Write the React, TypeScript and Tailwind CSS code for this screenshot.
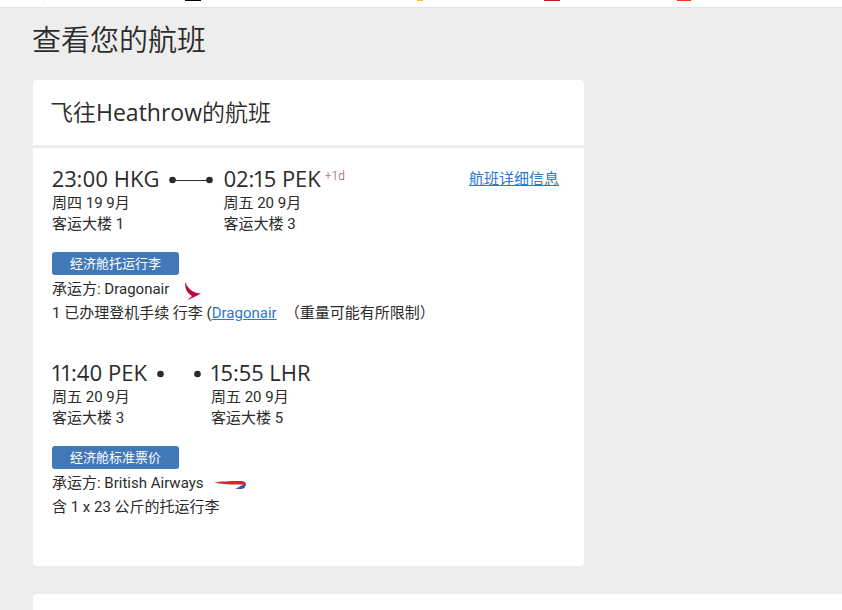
import type { ReactNode } from "react";

const heading = "font-['Open_Sans','Noto_Sans_CJK_SC',sans-serif]";

type Stop = { time: string; date: string; terminal: string; offset?: string };
type Flight = {
  from: Stop;
  to: Stop;
  line: boolean;
  cabin: string;
  carrier: string;
  logo: ReactNode;
  baggage: ReactNode;
};

function DragonairLogo() {
  return (
    <svg className="ml-4 mt-1 h-5 w-4" viewBox="0 0 16 20" aria-hidden="true">
      <path d="M0 1C0 8 2 12 7 15C6 16 4 18 2 19C6 18 11 15 16 12.500C9 12.500 3 8 0 1Z" fill="#bd0a3d" />
    </svg>
  );
}

function BritishAirwaysLogo() {
  return (
    <svg className="ml-2.5 mt-1 h-2.5 w-8" viewBox="0 0 32 10" aria-hidden="true">
      <path d="M0 2.500C7 1.300 20 .8 27 1C32 1.200 33 4 31 6C30 4.500 27 4.600 23 4.600C14 4.400 7 4 0 2.500Z" fill="#cf2a2d" />
      <path d="M31.500 4.500C32 8.500 28 10 21 8.500C25 8 26 5 31.500 4.500Z" fill="#315fa8" />
    </svg>
  );
}

function Connector({ line }: { line: boolean }) {
  return (
    <svg className="mx-2.5 mt-1 h-2 w-11 shrink-0" viewBox="0 0 44 8" fill="#2b2b2b" aria-hidden="true">
      <circle cx="3.500" cy="4" r="3.300" />
      <circle cx="40.500" cy="4" r="3.300" />
      {line && <rect x="3" y="4" width="37" height="1" />}
    </svg>
  );
}

function StopDetails({ stop, children }: { stop: Stop; children?: ReactNode }) {
  return (
    <div>
      <div className="flex h-7 items-center pb-0.5">
        <span className="whitespace-nowrap font-['Open_Sans',sans-serif] text-[22px] leading-7 proportional-nums">{stop.time}</span>
        {stop.offset && <sup className="top-0 mb-1 ml-1 text-xs font-light text-[#93506a]">{stop.offset}</sup>}
        {children}
      </div>
      <p>{stop.date}</p>
      <p>{stop.terminal}</p>
    </div>
  );
}

const flights: Flight[] = [
  {
    from: { time: "23:00 HKG", date: "周四 19 9月", terminal: "客运大楼 1" },
    to: { time: "02:15 PEK", date: "周五 20 9月", terminal: "客运大楼 3", offset: "+1d" },
    line: true,
    cabin: "经济舱托运行李",
    carrier: "Dragonair",
    logo: <DragonairLogo />,
    baggage: (
      <>
        1 已办理登机手续 行李 (<a href="#dragonair" className="text-[#2b78cf] underline">Dragonair</a>
        <span className="ml-2">（重量可能有所限制）</span>
      </>
    ),
  },
  {
    from: { time: "11:40 PEK", date: "周五 20 9月", terminal: "客运大楼 3" },
    to: { time: "15:55 LHR", date: "周五 20 9月", terminal: "客运大楼 5" },
    line: false,
    cabin: "经济舱标准票价",
    carrier: "British Airways",
    logo: <BritishAirwaysLogo />,
    baggage: "含 1 x 23 公斤的托运行李",
  },
];

function FlightSegment({ flight, link }: { flight: Flight; link?: boolean }) {
  return (
    <article>
      <div className="flex items-start">
        <StopDetails stop={flight.from}>
          <Connector line={flight.line} />
        </StopDetails>
        <StopDetails stop={flight.to} />
        {link && (
          <a href="#details" className="ml-auto mr-1.5 mt-1 text-[#2b78cf] underline">航班详细信息</a>
        )}
      </div>
      <div className="mb-0.5 mt-[17px] flex h-[23px] w-[127px] items-center justify-center rounded-[3px] bg-[#4178b7] text-[13px] text-white">
        {flight.cabin}
      </div>
      <p className="flex h-6 items-center">
        承运方: {flight.carrier}
        {flight.logo}
      </p>
      <p className="h-6 whitespace-nowrap leading-6">{flight.baggage}</p>
    </article>
  );
}

export default function App() {
  return (
    <div className="flex h-screen flex-col overflow-hidden bg-[#ededed] font-['Roboto','Noto_Sans_CJK_SC',sans-serif] text-[15px] font-[350] leading-[21px] text-[#2b2b2b]">
      <header className="flex h-2 shrink-0 items-start border-b border-[#e2e2e2] bg-white">
        <i className="ml-11 h-px w-px bg-[#dddddd]" />
        <i className="ml-[140px] h-px w-4 bg-black" />
        <i className="ml-[216px] h-px w-1.5 bg-[#ffc024]" />
        <i className="ml-[121px] h-px w-4 bg-[#c4171f]" />
        <i className="ml-[117px] h-px w-3.5 bg-[#ff3510]" />
      </header>
      <main className="flex grow flex-col pl-8">
        <h1 className={`${heading} pb-5 pt-3 text-[29px] font-[350] leading-10`}>查看您的航班</h1>
        <section className="ml-px w-[551px] max-w-full shrink-0 overflow-hidden rounded bg-white">
          <h2 className={`${heading} border-b-3 border-[#ededed] px-[17px] py-4 text-[23px] font-[350] leading-[33px]`}>
            飞往<span className="font-normal">Heathrow</span>的航班
          </h2>
          <div className="flex flex-col gap-[34px] px-[19px] pb-[47px] pt-[17px] font-normal">
            {flights.map((flight, index) => (
              <FlightSegment key={flight.from.time} flight={flight} link={index === 0} />
            ))}
          </div>
        </section>
        <section className="ml-px mt-7 grow rounded-tl bg-white" />
      </main>
    </div>
  );
}
